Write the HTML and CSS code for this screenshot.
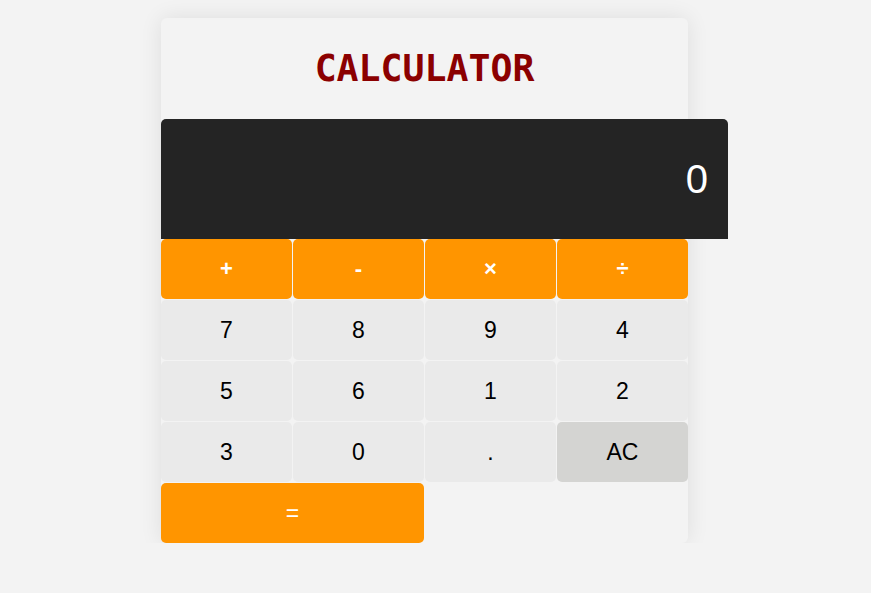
FILE: index.html
```html
<!DOCTYPE html>
<html>
<head>
<meta charset="utf-8">
<title>Calculator</title>
<link rel="stylesheet" href="styles.css">
</head>
<body>
<div class="page">
  <div class="calculator">
    <header class="header">
      <h1 class="title">CALCULATOR</h1>
    </header>
    <div class="display">0</div>
    <div class="keys">
      <button class="key op sign">+</button>
      <button class="key op sign">-</button>
      <button class="key op sign">×</button>
      <button class="key op sign">÷</button>
      <button class="key">7</button>
      <button class="key">8</button>
      <button class="key">9</button>
      <button class="key">4</button>
      <button class="key">5</button>
      <button class="key">6</button>
      <button class="key">1</button>
      <button class="key">2</button>
      <button class="key">3</button>
      <button class="key">0</button>
      <button class="key">.</button>
      <button class="key clear">AC</button>
      <button class="key op equals">=</button>
    </div>
  </div>
</div>
</body>
</html>
```

FILE: styles.css
```css
html, body {
  margin: 0;
  padding: 0;
  background: #f3f3f3;
}

.page {
  padding: 18px 0 0 161px;
}

.calculator {
  width: 527px;
  background: #f3f3f3;
  border-radius: 6px;
  box-shadow: 0 0 22px rgba(0, 0, 0, 0.09);
}

.header {
  height: 101px;
  display: flex;
  align-items: center;
  justify-content: center;
}

.title {
  margin: 0;
  font-family: "DejaVu Sans Mono", monospace;
  font-weight: bold;
  font-size: 36.5px;
  color: #8b0000;
  line-height: 1;
  padding-top: 2px;
}

.display {
  width: 100%;
  height: 120px;
  padding: 0 20px;
  box-sizing: content-box;
  background: #242424;
  color: #ffffff;
  border-radius: 5px 5px 0 0;
  display: flex;
  align-items: center;
  justify-content: flex-end;
  font-family: "Liberation Sans", Arial, sans-serif;
  font-size: 40px;
}

.keys {
  display: grid;
  grid-template-columns: repeat(4, 131px);
  grid-auto-rows: 60px;
  gap: 1px;
}

.key {
  border: none;
  margin: 0;
  padding: 0;
  border-radius: 5px;
  background: #eaeaea;
  color: #000000;
  font-family: "Liberation Sans", Arial, sans-serif;
  font-size: 23px;
}

.key.op {
  background: #ff9500;
  color: #ffffff;
}

.key.sign {
  font-weight: bold;
  font-size: 22px;
}

.key.clear {
  background: #d4d4d2;
}

.key.equals {
  grid-column: span 2;
}
```
